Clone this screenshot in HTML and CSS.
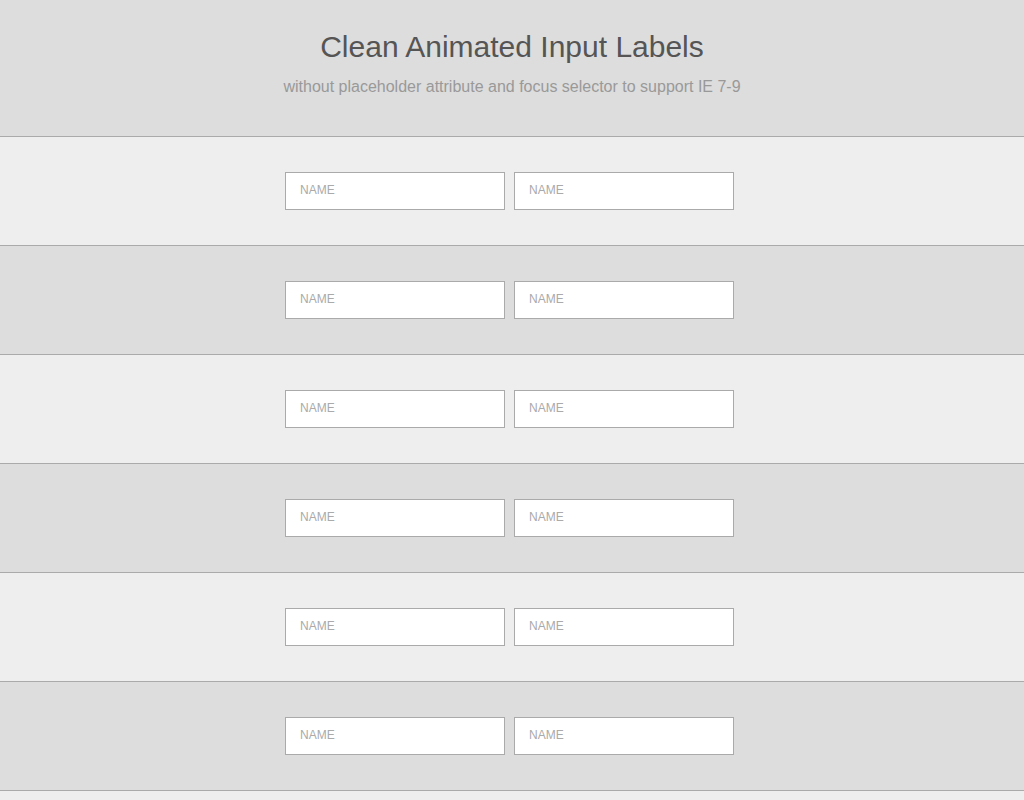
FILE: index.html
```html
<!DOCTYPE html>
<html>
<head>
<meta charset="utf-8">
<title>Clean Animated Input Labels</title>
<link rel="stylesheet" href="styles.css">
</head>
<body>
<header class="intro">
  <h1 class="title">Clean Animated Input Labels</h1>
  <p class="subtitle">without placeholder attribute and focus selector to support IE 7-9</p>
</header>
<section class="band light">
  <div class="row">
    <label class="field"><span class="label">NAME</span><input class="input" type="text"></label>
    <label class="field"><span class="label">NAME</span><input class="input" type="text"></label>
  </div>
</section>
<section class="band dark">
  <div class="row">
    <label class="field"><span class="label">NAME</span><input class="input" type="text"></label>
    <label class="field"><span class="label">NAME</span><input class="input" type="text"></label>
  </div>
</section>
<section class="band light">
  <div class="row">
    <label class="field"><span class="label">NAME</span><input class="input" type="text"></label>
    <label class="field"><span class="label">NAME</span><input class="input" type="text"></label>
  </div>
</section>
<section class="band dark">
  <div class="row">
    <label class="field"><span class="label">NAME</span><input class="input" type="text"></label>
    <label class="field"><span class="label">NAME</span><input class="input" type="text"></label>
  </div>
</section>
<section class="band light">
  <div class="row">
    <label class="field"><span class="label">NAME</span><input class="input" type="text"></label>
    <label class="field"><span class="label">NAME</span><input class="input" type="text"></label>
  </div>
</section>
<section class="band dark">
  <div class="row">
    <label class="field"><span class="label">NAME</span><input class="input" type="text"></label>
    <label class="field"><span class="label">NAME</span><input class="input" type="text"></label>
  </div>
</section>
<section class="band light">
  <div class="row">
    <label class="field"><span class="label">NAME</span><input class="input" type="text"></label>
    <label class="field"><span class="label">NAME</span><input class="input" type="text"></label>
  </div>
</section>
</body>
</html>
```
FILE: styles.css
```css
html, body {
  margin: 0;
  padding: 0;
  background: #dddddd;
  font-family: "Liberation Sans", Arial, Helvetica, sans-serif;
}
.intro {
  background: #dddddd;
  text-align: center;
  padding: 30px 0 0;
  height: 106px;
}
.title {
  margin: 0;
  font-size: 30px;
  font-weight: normal;
  line-height: 34px;
  color: #555555;
}
.subtitle {
  margin: 13px 0 0;
  font-size: 16px;
  line-height: 20px;
  color: #999999;
}
.band {
  border-top: 1px solid #aaaaaa;
  padding: 35px 0;
}
.band.light { background: #eeeeee; }
.band.dark { background: #dddddd; }
.row {
  display: flex;
  justify-content: center;
  gap: 9px;
  padding-right: 5px;
}
.field {
  position: relative;
  display: block;
  width: 220px;
  height: 38px;
}
.input {
  box-sizing: border-box;
  display: block;
  width: 220px;
  height: 38px;
  margin: 0;
  border: 1px solid #aaaaaa;
  background: #ffffff;
  outline: none;
  padding: 0 14px;
  font-family: inherit;
  font-size: 12px;
}
.label {
  position: absolute;
  left: 15px;
  top: -1px;
  line-height: 38px;
  font-size: 12px;
  color: #aaaaaa;
  pointer-events: none;
}
```
